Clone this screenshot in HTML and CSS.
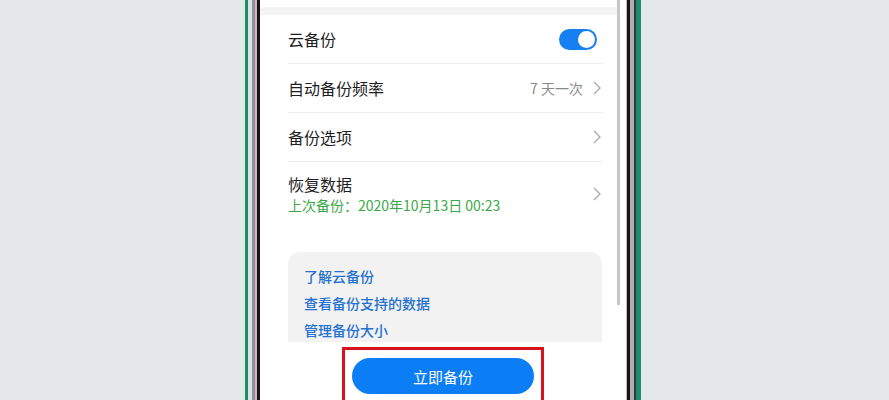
FILE: index.html
```html
<!DOCTYPE html>
<html lang="zh-CN">
<head>
<meta charset="utf-8">
<title>云备份</title>
<link rel="stylesheet" href="styles.css">
</head>
<body>
<div class="phone">
  <div class="strip s-green-l"></div>
  <div class="strip s-light-l"></div>
  <div class="strip s-grey-l"></div>
  <div class="strip s-pink-l"></div>
  <div class="strip s-black-l"></div>
  <div class="screen">
    <div class="scroll">
      <div class="content">
        <div class="top-white"></div>
        <div class="band"></div>
        <div class="list">
          <div class="row">
            <span class="title">云备份</span>
            <span class="toggle"><span class="knob"></span></span>
          </div>
          <div class="row">
            <span class="title">自动备份频率</span>
            <span class="value">7 天一次</span>
            <svg class="chev" viewBox="0 0 8 14" width="8" height="14"><path d="M1 1 L7 7 L1 13"/></svg>
          </div>
          <div class="row">
            <span class="title">备份选项</span>
            <svg class="chev" viewBox="0 0 8 14" width="8" height="14"><path d="M1 1 L7 7 L1 13"/></svg>
          </div>
          <div class="row row-tall">
            <div class="texts">
              <div class="title">恢复数据</div>
              <div class="sub">上次备份：2020年10月13日 00:23</div>
            </div>
            <svg class="chev" viewBox="0 0 8 14" width="8" height="14"><path d="M1 1 L7 7 L1 13"/></svg>
          </div>
        </div>
        <div class="help">
          <div class="link">了解云备份</div>
          <div class="link">查看备份支持的数据</div>
          <div class="link">管理备份大小</div>
        </div>
      </div>
      <div class="gutter"><div class="thumb"></div></div>
    </div>
    <div class="bottom">
      <div class="highlight">
        <div class="btn">立即备份</div>
      </div>
    </div>
  </div>
  <div class="strip s-pink-r"></div>
  <div class="strip s-black-r"></div>
  <div class="strip s-grey-r"></div>
  <div class="strip s-dark-r"></div>
  <div class="strip s-green-r"></div>
</div>
</body>
</html>
```

FILE: styles.css
```css
html, body {
  margin: 0;
  padding: 0;
}
body {
  background: #e5e8e9;
  font-family: "Noto Sans CJK SC", "Noto Sans", sans-serif;
  overflow: hidden;
}
.phone {
  display: flex;
  height: 400px;
  width: 396px;
  margin-left: 245px;
}
.strip { flex: none; height: 100%; }
.s-green-l { width: 3px; background: #1f8a69; }
.s-light-l { width: 4px; background: #dce3e1; }
.s-grey-l { width: 3px; background: #9b8e99; }
.s-pink-l { width: 2px; background: #c7b7c1; }
.s-black-l { width: 3px; background: #161616; }
.s-pink-r { width: 1px; background: #c4b4bd; }
.s-black-r { width: 3px; background: #151515; }
.s-grey-r { width: 4px; background: #b8a9b3; }
.s-dark-r { width: 2px; background: #2c3d37; }
.s-green-r { width: 5px; background: #1f8d6b; }

.screen {
  width: 366px;
  flex: none;
  background: #fff;
  display: flex;
  flex-direction: column;
  overflow: hidden;
}
.scroll {
  display: flex;
  height: 342px;
  flex: none;
  overflow: hidden;
}
.content {
  width: 357px;
  flex: none;
}
.gutter {
  width: 9px;
  flex: none;
}
.thumb {
  width: 3px;
  height: 305px;
  background: #c6c6c6;
}
.top-white { height: 7px; }
.band { height: 8px; background: #f4f4f4; }

.list {
  margin: 0 14px 0 28px;
}
.row {
  display: flex;
  align-items: center;
  height: 48px;
  border-bottom: 1px solid #ececec;
}
.row-tall {
  height: auto;
  padding: 11px 0;
  border-bottom: none;
}
.title {
  font-size: 16px;
  line-height: 22px;
  color: #1e1e1e;
  flex: 1;
}
.texts { flex: 1; }
.sub {
  font-size: 14px;
  line-height: 20px;
  color: #3aa847;
}
.value {
  font-size: 14px;
  color: #8a8a8a;
  margin-right: 10px;
}
.chev {
  flex: none;
  margin-right: 2px;
}
.chev path {
  fill: none;
  stroke: #a8a8a8;
  stroke-width: 1.3;
}
.toggle {
  width: 38px;
  height: 21px;
  border-radius: 11px;
  background: #1680f3;
  margin-right: 6px;
  display: flex;
  align-items: center;
  justify-content: flex-end;
  padding: 0 2px;
  box-sizing: border-box;
}
.knob {
  width: 17px;
  height: 17px;
  border-radius: 50%;
  background: #fff;
}

.help {
  margin: 26px 0 0 28px;
  width: 314px;
  height: 90px;
  box-sizing: border-box;
  padding: 11px 16px 0;
  background: #f2f2f2;
  border-radius: 12px 12px 0 0;
}
.link {
  font-size: 14px;
  line-height: 27px;
  color: #2471cf;
  font-weight: 500;
}

.bottom {
  flex: 1;
  display: flex;
  justify-content: center;
  background: #fff;
}
.highlight {
  margin-top: 5px;
  width: 202px;
  height: 70px;
  box-sizing: border-box;
  border: 3px solid #d7141b;
  padding: 8px 7px 0;
}
.btn {
  height: 36px;
  border-radius: 18px;
  background: #0b7df5;
  color: #fff;
  font-size: 15px;
  display: flex;
  align-items: center;
  justify-content: center;
}
```
